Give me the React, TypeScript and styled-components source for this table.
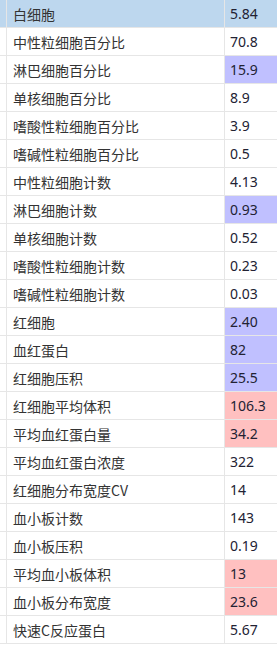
import React from "react";
import styled, { createGlobalStyle } from "styled-components";

const Global = createGlobalStyle`
  html, body { margin: 0; padding: 0; background: #ffffff; overflow: hidden; }
  body { font-family: "Noto Sans", "Noto Sans CJK SC", sans-serif; }
`;

type Tone = "none" | "low" | "high";

const rows: { name: string; value: string; tone: Tone }[] = [
  { name: "白细胞", value: "5.84", tone: "none" },
  { name: "中性粒细胞百分比", value: "70.8", tone: "none" },
  { name: "淋巴细胞百分比", value: "15.9", tone: "low" },
  { name: "单核细胞百分比", value: "8.9", tone: "none" },
  { name: "嗜酸性粒细胞百分比", value: "3.9", tone: "none" },
  { name: "嗜碱性粒细胞百分比", value: "0.5", tone: "none" },
  { name: "中性粒细胞计数", value: "4.13", tone: "none" },
  { name: "淋巴细胞计数", value: "0.93", tone: "low" },
  { name: "单核细胞计数", value: "0.52", tone: "none" },
  { name: "嗜酸性粒细胞计数", value: "0.23", tone: "none" },
  { name: "嗜碱性粒细胞计数", value: "0.03", tone: "none" },
  { name: "红细胞", value: "2.40", tone: "low" },
  { name: "血红蛋白", value: "82", tone: "low" },
  { name: "红细胞压积", value: "25.5", tone: "low" },
  { name: "红细胞平均体积", value: "106.3", tone: "high" },
  { name: "平均血红蛋白量", value: "34.2", tone: "high" },
  { name: "平均血红蛋白浓度", value: "322", tone: "none" },
  { name: "红细胞分布宽度CV", value: "14", tone: "none" },
  { name: "血小板计数", value: "143", tone: "none" },
  { name: "血小板压积", value: "0.19", tone: "none" },
  { name: "平均血小板体积", value: "13", tone: "high" },
  { name: "血小板分布宽度", value: "23.6", tone: "high" },
  { name: "快速C反应蛋白", value: "5.67", tone: "none" },
];

const Table = styled.div`
  display: flex;
  flex-direction: column;
  width: 277px;
`;

const Row = styled.div<{ $selected?: boolean }>`
  display: flex;
  height: 27px;
  border-bottom: 1px solid #e6e6e6;
  background: ${(p) => (p.$selected ? "#bdd7ee" : "#ffffff")};
`;

const Gutter = styled.div`
  width: 6px;
  flex: none;
  border-right: 1px solid #e6e6e6;
`;

const NameCell = styled.div`
  width: 211px;
  flex: none;
  padding-left: 6px;
  border-right: 1px solid #e6e6e6;
  display: flex;
  align-items: center;
  font-size: 14px;
  color: #333333;
  white-space: nowrap;
  font-family: "Noto Sans CJK SC", sans-serif;
`;

const toneBg: Record<Tone, string> = {
  none: "transparent",
  low: "#c0c0ff",
  high: "#ffc0c0",
};

const ValueCell = styled.div<{ $tone: Tone }>`
  flex: 1;
  padding-left: 5px;
  display: flex;
  align-items: center;
  font-size: 14px;
  color: #222233;
  background: ${(p) => toneBg[p.$tone]};
  font-family: "Noto Sans", "Noto Sans CJK SC", sans-serif;
`;

export default function App() {
  return (
    <>
      <Global />
      <Table>
        {rows.map((r, i) => (
          <Row key={r.name} $selected={i === 0}>
            <Gutter />
            <NameCell>{r.name}</NameCell>
            <ValueCell $tone={r.tone}>{r.value}</ValueCell>
          </Row>
        ))}
      </Table>
    </>
  );
}
